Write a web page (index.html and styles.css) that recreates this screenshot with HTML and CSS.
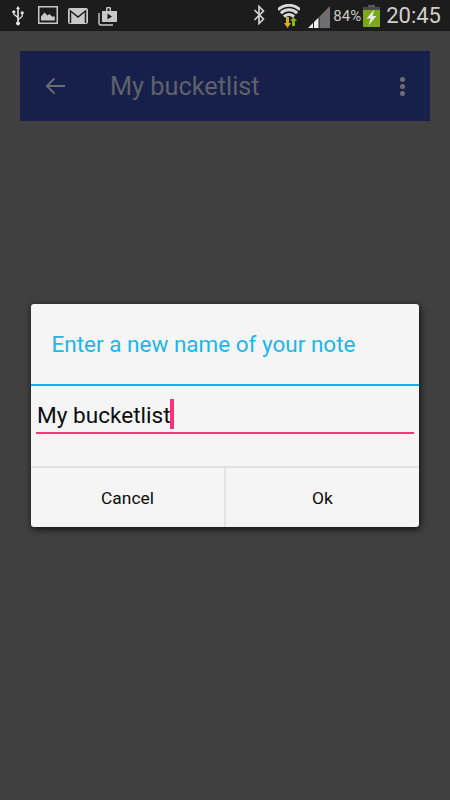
FILE: index.html
```html
<!DOCTYPE html>
<html lang="en">
<head>
<meta charset="utf-8">
<title>My bucketlist</title>
<link rel="stylesheet" href="styles.css">
</head>
<body>
<div class="screen">
  <header class="status">
    <div class="status-left">
      <svg class="ic-usb" viewBox="0 0 14 20"><path d="M7 0.5 L9 3.5 H7.8 V13 L10.6 10.4 V8.6 H9.8 V6 H12.6 V8.6 H11.8 V11 L7.8 14.6 V16.2 A1.9 1.9 0 1 1 6.2 16.2 V12.2 L2.2 9 V7.8 A1.5 1.5 0 1 1 3.4 7.8 V8.4 L6.2 10.6 V3.5 H5 Z" fill="#e6e6e6"/></svg>
      <svg class="ic-photo" viewBox="0 0 20 18"><rect x="0.75" y="0.75" width="18.5" height="16.5" fill="#1c1c1c" stroke="#c8c8c8" stroke-width="1.5"/><path d="M3 14.5 V10.5 L6.5 6.5 L9.5 9.5 L11.5 8 L14 10.5 H16.8 V14.5 Z" fill="#c8c8c8"/></svg>
      <svg class="ic-mail" viewBox="0 0 20 16"><rect width="20" height="16" rx="2" fill="#c8c8c8"/><path d="M2.5 15 V3 L10 9 L17.5 3 V15" fill="none" stroke="#1c1c1c" stroke-width="1.5"/></svg>
      <svg class="ic-bag" viewBox="0 0 20 20"><path d="M1 7 V17 Q1 19 3 19 H15" fill="none" stroke="#c8c8c8" stroke-width="1.4"/><path d="M4 5 H8 V2 Q8 1 9 1 H12 Q13 1 13 2 V5 H19 V15 Q19 16 18 16 H5 Q4 16 4 15 Z" fill="#c8c8c8"/><rect x="9.4" y="2.4" width="2.2" height="2.6" fill="#1c1c1c"/><path d="M9.5 7.5 L14 10.5 L9.5 13.5 Z" fill="#1c1c1c"/></svg>
    </div>
    <div class="status-right">
      <svg class="ic-bt" viewBox="0 0 12 20"><path d="M1 5 L10 14 L5.5 18.5 V1.5 L10 6 L1 15" fill="none" stroke="#d0d0d0" stroke-width="1.7"/></svg>
      <svg class="ic-wifi" viewBox="0 0 22 24"><g fill="none" stroke="#d8d8d8" stroke-width="3"><path d="M0 5.7 A16 16 0 0 1 22 5.7"/><path d="M2.9 9.2 A11.5 11.5 0 0 1 19.1 9.2"/><path d="M6 12.6 A7 7 0 0 1 16 12.6"/></g><path d="M8 13 H11 V19 H13 L9.5 24 L6 19 H8 Z" fill="#e0a81c"/><path d="M14 22 H17 V17 H19 L15.5 13 L12 17 H14 Z" fill="#86b51a"/></svg>
      <svg class="ic-signal" viewBox="0 0 22 22"><path d="M11.5 22 V10.5 L22 0 V22 Z" fill="#6e6e6e"/><path d="M0 22 L5 17 V22 Z M6 22 V16 L10.5 11.5 V22 Z" fill="#f0f0f0"/></svg>
      <span class="pct">84%</span>
      <svg class="ic-batt" viewBox="0 0 17 22"><rect x="5" y="0" width="7" height="2" fill="#5a5a5a"/><rect y="2" width="17" height="4" fill="#4a4a4a"/><rect y="5" width="17" height="17" fill="#7ba815"/><path d="M11 5 L3.5 13.5 H7.6 L5.5 20.5 L13.5 11 H9.4 L11.5 5 Z" fill="#e8e8e8"/></svg>
      <span class="clock">20:45</span>
    </div>
  </header>
  <main class="content">
    <div class="appbar">
      <svg class="ic-back" viewBox="0 0 22 18"><path d="M21 9 H2 M10 1 L2 9 L10 17" fill="none" stroke="#6a6c76" stroke-width="2"/></svg>
      <div class="appbar-title">My bucketlist</div>
      <div class="dots"><i></i><i></i><i></i></div>
    </div>
  </main>
  <div class="dialog">
    <div class="dialog-title">Enter a new name of your note</div>
    <div class="dialog-body">
      <div class="field"><span class="field-text">My bucketlist</span><i class="caret"></i></div>
    </div>
    <div class="actions">
      <div class="action">Cancel</div>
      <div class="action">Ok</div>
    </div>
  </div>
</div>
</body>
</html>
```
FILE: styles.css
```css
* { box-sizing: border-box; }
html, body { margin: 0; padding: 0; }
body { width: 450px; height: 800px; overflow: hidden; font-family: Roboto, sans-serif; }
.screen { position: relative; width: 450px; height: 800px; background: #404041; }

.status { height: 31px; background: #1c1c1c; display: flex; justify-content: space-between; align-items: center; }
.status-left { display: flex; align-items: center; padding-left: 11px; }
.status-right { display: flex; align-items: center; padding-right: 9px; }
.status svg { display: block; flex: none; }
.ic-usb { width: 14px; height: 21px; margin-top: -1px; }
.ic-photo { width: 20px; height: 18px; margin-left: 13px; margin-top: -1px; }
.ic-mail { width: 20px; height: 16px; margin-left: 10px; }
.ic-bag { width: 20px; height: 20px; margin-left: 10px; }
.ic-bt { width: 13px; height: 20px; margin-top: -1px; }
.ic-wifi { width: 22px; height: 24px; margin-left: 12px; margin-top: 0; }
.ic-signal { width: 22px; height: 22px; margin-left: 8px; margin-top: 2px; }
.pct { font-size: 15px; color: #c8c8c8; margin-left: 3px; }
.ic-batt { width: 17px; height: 22px; margin-left: 2px; margin-top: 1px; }
.clock { font-size: 22px; color: #cfcfcf; margin-left: 6px; margin-top: -1px; }

.content { padding: 20px; }
.appbar { height: 70px; background: #17204a; display: flex; align-items: center; padding-left: 25px; padding-right: 25px; }
.ic-back { width: 21px; height: 18px; flex: none; }
.appbar-title { font-size: 25.3px; color: #5f616c; margin-left: 44px; flex: 1; }
.dots { display: flex; flex-direction: column; gap: 2px; }
.dots i { display: block; width: 5px; height: 5px; border-radius: 50%; background: #6a6c76; }

.dialog { position: absolute; left: 31px; top: 304px; width: 388px; height: 223px; background: #f5f5f5; border-radius: 3px; box-shadow: 1px 2px 7px rgba(0,0,0,.8); display: flex; flex-direction: column; }
.dialog-title { height: 80px; flex: none; padding: 27px 0 0 20.5px; font-size: 22.5px; line-height: 27px; color: #22b5ea; }
.dialog-body { height: 82px; flex: none; border-top: 2px solid #0fb4ea; padding: 0 5px; }
.field { height: 48px; border-bottom: 2px solid #f23c78; display: flex; align-items: flex-end; padding: 0 0 3px 1px; font-size: 22.6px; line-height: 30px; color: #0c0c0c; }
.field-text { margin-bottom: -2px; }
.caret { display: block; width: 4px; height: 30px; background: #ff2f79; margin-left: -1px; }
.actions { flex: 1; display: flex; border-top: 2px solid #e0e0e0; }
.action { flex: 1; display: flex; align-items: center; justify-content: center; font-size: 17.4px; color: #0c0c0c; padding-top: 1px; }
.action + .action { border-left: 2px solid #e4e4e4; }
```
